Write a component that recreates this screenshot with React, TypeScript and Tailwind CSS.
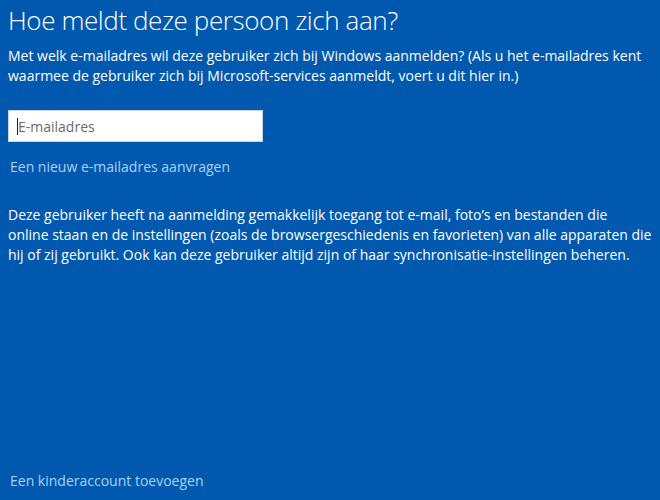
export default function App() {
  return (
    <div className="w-[660px] h-[500px] bg-[#0059ae] text-white font-['Open_Sans',sans-serif] flex flex-col px-2 overflow-hidden">
      <h1 className="mt-[3px] text-[26px] font-light leading-[34px] tracking-[-0.4px]">Hoe meldt deze persoon zich aan?</h1>

      <p className="mt-[9px] text-[14px] leading-[20px]">
        Met welk e-mailadres wil deze gebruiker zich bij Windows aanmelden? (Als u het e-mailadres kent
        <br />
        waarmee de gebruiker zich bij Microsoft-services aanmeldt, voert u dit hier in.)
      </p>

      <div className="mt-[24px] w-[255px] h-[32px] bg-white border border-[#c8d4e0] flex items-center pl-[8px]">
        <span className="w-px h-[17px] bg-[#222]" />
        <span className="text-[14px] text-[#6b6b6b]">E-mailadres</span>
      </div>

      <a className="mt-[15px] pl-[2px] text-[14px] leading-[20px] text-[#a8d3f6]">Een nieuw e-mailadres aanvragen</a>

      <p className="mt-[28px] text-[14px] leading-[20px]">
        Deze gebruiker heeft na aanmelding gemakkelijk toegang tot e-mail, foto’s en bestanden die
        <br />
        online staan en de instellingen (zoals de browsergeschiedenis en favorieten) van alle apparaten die
        <br />
        hij of zij gebruikt. Ook kan deze gebruiker altijd zijn of haar synchronisatie-instellingen beheren.
      </p>

      <a className="mt-auto mb-[9px] pl-[2px] text-[14px] leading-[20px] text-[#a8d3f6]">Een kinderaccount toevoegen</a>
    </div>
  );
}
